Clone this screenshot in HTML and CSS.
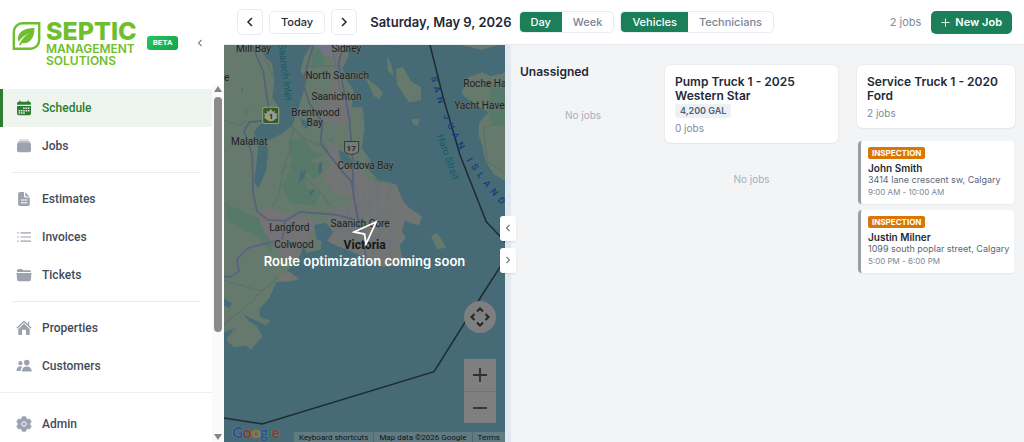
FILE: index.html
```html
<!DOCTYPE html>
<html lang="en">
<head>
<meta charset="utf-8">
<meta name="viewport" content="width=device-width, initial-scale=1">
<title>Schedule</title>
<link rel="stylesheet" href="styles.css">
</head>
<body>
<div class="app">
  <aside class="sidebar">
    <div class="brand">
      <svg class="brand-mark" viewBox="0 0 28 28" aria-hidden="true">
        <path d="M10 1.3H26.7V18a8.7 8.7 0 0 1-8.7 8.7H1.3V10A8.7 8.7 0 0 1 10 1.3Z" fill="none" stroke="#6fbe2e" stroke-width="2.4"/>
        <path d="M22 6C11 6 5.500 10.500 5.500 16.500c0 1.400.3 2.500.8 3.300C9 15.500 12.500 12.800 17 10.800c-4.500 3-8 6.500-10.500 12.200l1.600.4 1.400-2.400c7 1.200 12.500-4 12.500-15Z" fill="#6fbe2e"/>
      </svg>
      <div class="brand-name"><span class="brand-top">SEPTIC</span><span class="brand-sub">MANAGEMENT</span><span class="brand-sub">SOLUTIONS</span></div>
      <span class="beta">BETA</span>
      <button class="collapse" aria-label="Collapse sidebar"><svg viewBox="0 0 8 10" width="6" height="8"><path d="M6 1 2 5l4 4" fill="none" stroke="#7b8494" stroke-width="1.500"/></svg></button>
    </div>
    <div class="side-body">
      <nav class="nav">
        <a class="nav-item active" href="#schedule"><svg class="icon" viewBox="0 0 16 16"><path d="M1 4.800V3.500a1.800 1.800 0 0 1 1.800-1.800H3V.8h1.600v.9h6.800V.8H13v.9h.2A1.800 1.800 0 0 1 15 3.500v1.300ZM1 6h14v7.500a1.800 1.800 0 0 1-1.800 1.800H2.800A1.800 1.800 0 0 1 1 13.500Z" fill="currentColor"/><path d="M7.200 7.500h1.500V9H7.200zm2.400 0h1.500V9H9.600zm2.300 0h1.500V9h-1.500zM2.600 9.900h1.500v1.500H2.600zm2.300 0h1.500v1.500H4.900zm2.300 0h1.500v1.500H7.200zm2.400 0h1.500v1.500H9.600zm2.300 0h1.500v1.500h-1.500zM2.600 12.200h1.500v1.500H2.600zm2.300 0h1.500v1.500H4.900zm2.300 0h1.500v1.500H7.200z" fill="#edf5ee"/></svg>Schedule</a>
        <a class="nav-item" href="#jobs"><svg class="icon" viewBox="0 0 16 16"><path d="M4.500 1.500h7a1.300 1.300 0 0 1 1.200.9h-9.400a1.300 1.300 0 0 1 1.200-.9ZM3.500 3h9c.9 0 1.500.4 1.500 1H2c0-.6.600-1 1.500-1Z" fill="#b8bdc7"/><rect x="1" y="4.300" width="14" height="10" rx="2" fill="currentColor"/></svg>Jobs</a>
        <hr class="rule">
        <a class="nav-item" href="#estimates"><svg class="icon" viewBox="0 0 16 16"><path d="M3.800 1H8v4a1.500 1.500 0 0 0 1.500 1.500h4.300v6.800a1.700 1.700 0 0 1-1.700 1.700H3.800a1.700 1.700 0 0 1-1.700-1.700V2.700A1.700 1.700 0 0 1 3.800 1ZM9.200 1.200l4.400 4.200H10a.8.8 0 0 1-.8-.8Z" fill="currentColor"/><path d="M4.800 9h6.500M4.800 11.800h6.500" stroke="#fff" stroke-width="1"/></svg>Estimates</a>
        <a class="nav-item" href="#invoices"><svg class="icon" viewBox="0 0 16 16"><path d="M4.500 3.800H15M4.500 8H15M4.500 12.200H15M1.200 3.800h1.500M1.200 8h1.500M1.200 12.200h1.500" stroke="currentColor" stroke-width="1.200"/></svg>Invoices</a>
        <a class="nav-item" href="#tickets"><svg class="icon" viewBox="0 0 16 16"><path d="M1 5V3.500A1.500 1.500 0 0 1 2.500 2h3.200l1.600 1.300h6.200A1.500 1.500 0 0 1 15 4.800V5ZM.5 6h15l-.6 6.800a1.500 1.500 0 0 1-1.500 1.400H2.600a1.500 1.500 0 0 1-1.500-1.400Z" fill="currentColor"/></svg>Tickets</a>
        <hr class="rule">
        <a class="nav-item" href="#properties"><svg class="icon" viewBox="0 0 16 16"><path d="m8 3.600 5.700 5.300v5.300a.8.800 0 0 1-.8.800H10v-4.500a.7.700 0 0 0-.7-.7H6.700a.7.700 0 0 0-.7.700V15H3.100a.8.800 0 0 1-.8-.8V8.900Z" fill="currentColor"/><path d="M.8 8.200 8 1.500l7.200 6.700M12.500 5V1.700" fill="none" stroke="currentColor" stroke-width="1.300"/></svg>Properties</a>
        <a class="nav-item" href="#customers"><svg class="icon" viewBox="0 0 16 16"><circle cx="4.400" cy="5.200" r="2.100" fill="currentColor"/><circle cx="10.800" cy="4.600" r="2.800" fill="currentColor"/><path d="M.5 13c0-3 1.500-4.700 3.900-4.700.8 0 1.500.2 2 .5C5.300 9.700 4.800 11 4.700 13ZM5.800 13.600c0-3.500 2-5.200 5-5.200s5 1.700 5 5.200Z" fill="currentColor"/></svg>Customers</a>
        <div class="nav-foot">
          <a class="nav-item" href="#admin"><svg class="icon" viewBox="0 0 16 16"><path d="m6.300.8-.5 2a5.500 5.500 0 0 0-1.300.8l-2-.6L.8 6l1.500 1.400v1.300L.8 10l1.700 3 2-.6c.4.300.8.600 1.300.8l.5 2h3.400l.5-2c.5-.2.900-.5 1.300-.8l2 .6 1.700-3-1.500-1.300V7.400L15.200 6l-1.700-3-2 .6a5.500 5.500 0 0 0-1.300-.8l-.5-2Z" fill="currentColor" stroke="currentColor" stroke-linejoin="round"/><circle cx="8" cy="8" r="2.200" fill="none" stroke="#fff"/></svg>Admin</a>
        </div>
      </nav>
      <div class="scrollbar" aria-hidden="true"><i class="arrow-up"></i><i class="thumb"></i><i class="arrow-down"></i></div>
    </div>
  </aside>

  <main class="main">
    <header class="toolbar">
      <div class="dates">
        <button class="step" aria-label="Previous day"><svg viewBox="0 0 8 10" width="8" height="10"><path d="M6 1 2 5l4 4" fill="none" stroke="currentColor" stroke-width="1.500"/></svg></button>
        <button class="today">Today</button>
        <button class="step" aria-label="Next day"><svg viewBox="0 0 8 10" width="8" height="10"><path d="m2 1 4 4-4 4" fill="none" stroke="currentColor" stroke-width="1.500"/></svg></button>
      </div>
      <h1 class="date">Saturday, May 9, 2026</h1>
      <div class="toggle"><button class="on">Day</button><button>Week</button></div>
      <div class="toggle"><button class="on">Vehicles</button><button>Technicians</button></div>
      <span class="count">2 jobs</span>
      <button class="new-job"><svg viewBox="0 0 10 10" width="9" height="9"><path d="M5 .5v9M.5 5h9" stroke="#fff" stroke-width="1"/></svg>New Job</button>
    </header>

    <div class="content">
      <section class="map" aria-label="Map">
        <svg class="map-art" viewBox="224 45 281 396" preserveAspectRatio="xMinYMin slice">
          <rect x="224" y="45" width="600" height="900" fill="#466b76"/>
          <g fill="#657a6c">
            <path d="M224 45H258L266 58 272 64 274 80 272 98 278 106V116L262 122 254 131 258 148 256 165 254 180 258 188 266 170 268 150 266 141 282 133 292 125 298 108 303 92 306 80 300 70 304 56 311 45H346L348 56 342 68 346 80 353 90 351 107H362L364 128 361 148 370 160 365 166 377 179 396 184 400 197 408 207 421 216 418 224 409 222 404 219 401 230 405 237 399 244 401 257 394 265 383 266 368 261 361 255 354 250 343 247 332 243 322 237 320 249 306 252 302 240 301 252 295 260 287 270 299 277 292 280 276 281 269 297 259 308 260 316 270 319 266 324 243 313 248 319 257 325 262 335 251 348 246 344 234 346 226 338 236 326 224 331Z"/>
            <path d="M386 57 390 63 393 76 387 70ZM395 69 402 67 410 81 420 87V100L408 102 396 84ZM365 78 374 84 382 92 379 99 373 96ZM411 119 418 118 417 125 412 124ZM467 77 481 72 489 76 505 72V181L492 173 484 160 481 145 477 134 478 122 487 112 469 101 460 93ZM430 235 436 232 442 241 445 247 436 248ZM461 45H496L480 50Z"/>
          </g>
          <g fill="#56796a">
            <path d="M288 140 303 136 312 151 325 153 310 160 324 169 314 179 305 171 307 188 320 190 315 205 290 202 282 186 291 165ZM312 48 326 51 323 64 311 69ZM322 140 332 137 334 151 323 150ZM350 160 358 159 358 172 350 171ZM372 178 382 181 375 199 367 190ZM225 202 258 217 279 229 270 252 260 238 228 220ZM490 84 505 78V124L492 126 487 115ZM243 108h6v6h-6z"/>
          </g>
          <g fill="#757375">
            <path d="M318 45H341L347 48 341 63 344 90 351 105 348 123H319L317 106 330 97 331 61Z" opacity=".75"/>
            <path d="M324 137 338 146 341 158 357 166 366 178 386 184 398 190 404 204 421 216 418 224 404 219 401 230 405 237 398 245 401 257 391 265 368 261 361 255 332 243 322 237 331 230 327 218 331 210 350 204 351 198 334 194 323 175 331 164Z" opacity=".85"/>
            <path d="M257 212 270 207 293 216 314 219 313 231 303 241 299 256 287 260 276 247 264 231ZM279 275 288 270 298 278 280 280Z"/>
            <path d="M317 45H337L334 57 322 55Z" fill="#737584"/>
          </g>
          <g fill="#466b76"><path d="M314 224 325 222 333 231 325 242 316 238ZM300 172l6-4-3 10-5 4ZM318 163l4-2-1 11-3 2ZM338 149l9 5 5 8-5 6-7-8ZM241 87l1 6 1-4ZM224 297l8 5-3 5-5-3ZM300 118l6 3 1 8-5-4ZM309 192l4-4 2 1-5 6Z"/></g>
          <g fill="none" stroke="#59706c" stroke-width="1">
            <path d="M224 120 240 125 246 120M293 125 290 147 283 169 278 196 272 205M279 173 287 165 301 169 309 181 318 188 330 206M291 126 303 137 319 145M305 66H340M331 45 336 70 341 98M265 59 273 77M224 279 251 287 262 290 277 277M224 323 252 300 262 289M483 127 497 122 505 121M482 127 486 161 505 173"/>
            <path d="M319 123H350M340 105V124M224 316 233 313 244 319 240 323M228 342 236 332 232 328" stroke="#74706f"/>
          </g>
          <path d="M334 150 355 182 361 219M340 170 351 199 341 232M339 224 372 203 397 217M344 235 370 222 396 231M352 250 356 226 378 192M362 180 364 255M377 183 379 260M388 188 390 258M333 226 362 234 398 242M328 212 358 205 391 190M275 214 286 226 299 213M266 231 282 234 308 225M290 218 296 243M333 190 347 208 354 220M330 235 349 214 365 197M368 185 373 264" stroke="#687080" stroke-width=".7" fill="none"/>
          <g fill="none" stroke="#56617a" stroke-width="1.800">
            <path d="M252 46 263 71 268 105 270 115M264 120 249 122 244 131 252 154 253 193 257 211 268 219 285 220 300 211 337 214 354 219M313 45 302 82 309 103 322 122 320 143 341 170 351 181 356 213 361 234M341 51 338 64 345 98 349 121 352 160 353 196 358 219"/>
            <path d="M285 219 282 239M277 240 263 243 248 247 237 258 239 270 230 276 224 275M364 248 365 256" stroke="#596386"/>
          </g>
          <path d="M383 45C425 56 456 59 505 66" stroke="#2e6f7b" fill="none" stroke-dasharray="5 3"/>
          <path d="M429 45 442 97 459 155 485 221 505 242V256L480 295 433 370 262 422 224 416" fill="none" stroke="#1d2c31" stroke-width="1.500"/>
          <g class="place">
            <text x="236" y="52">Mill Bay</text><text x="331" y="52">Sidney</text>
            <text x="305" y="79">North Saanich</text><text x="311" y="100">Saanichton</text>
            <text x="291" y="116">Brentwood</text><text x="306" y="126">Bay</text>
            <text x="231" y="145">Malahat</text><text x="337" y="168">Cordova Bay</text>
            <text x="269" y="230">Langford</text><text x="274" y="247">Colwood</text>
            <text x="330" y="226">Saanich Core</text><text x="343" y="248" class="city">Victoria</text>
            <text x="462" y="87">Roche Harbor</text><text x="453" y="109">Yacht Haven</text><text x="224" y="81">e</text>
          </g>
          <g class="water-label">
            <text transform="translate(278 44) rotate(83)">Saanich Inlet</text>
            <text transform="translate(436 135) rotate(71)">Haro Strait</text>
          </g>
          <path id="arc" d="M430 77Q446 151 514 219" fill="none"/>
          <text class="county"><textPath href="#arc">SAN JUAN ISLAND</textPath></text>
          <g><rect x="262.500" y="107" width="16" height="16" rx="2" fill="#355c22" stroke="#92a184"/><path d="m270.500 108.500 2 3 2-1v3l3-.5-1.500 3 1.500 1-4 3-3 1-3-1-4-3 1.500-1-1.500-3 3 .5v-3l2 1Z" fill="#999d91"/><text x="268.500" y="119" class="shield">1</text><path d="M344 141h14v9q0 3-7 4-7-1-7-4Z" fill="#777b78" stroke="#343c3b"/><text x="346" y="150" class="shield">17</text></g>
        </svg>
        <div class="soon">
          <svg viewBox="0 0 26 26" width="26" height="26" aria-hidden="true"><path d="M24 2 2 12l10.500 2L14 24Z" fill="none" stroke="#fff" stroke-width="1.800"/></svg>
          <p>Route optimization coming soon</p>
        </div>
        <div class="map-controls">
          <button class="pan" aria-label="Map camera controls"><svg viewBox="0 0 20 20" width="20" height="20"><path d="m7 4.500 3-3 3 3M7 15.500l3 3 3-3M4.500 7l-3 3 3 3M15.500 7l3 3-3 3" fill="none" stroke="#262626" stroke-width="2"/></svg></button>
          <div class="zoom"><button aria-label="Zoom in"><svg viewBox="0 0 14 14" width="14" height="14"><path d="M7 0v14M0 7h14" stroke="#303030" stroke-width="1.800"/></svg></button><button aria-label="Zoom out"><svg viewBox="0 0 14 14" width="14" height="14"><path d="M0 7h14" stroke="#303030" stroke-width="1.800"/></svg></button></div>
        </div>
        <div class="google"><span class="g-blue">G</span><span class="g-red">o</span><span class="g-gold">o</span><span class="g-blue">g</span><span class="g-green">l</span><span class="g-red">e</span></div>
        <div class="legal"><button>Keyboard shortcuts</button><span>Map data ©2026 Google</span><a href="#terms">Terms</a></div>
      </section>

      <div class="splitter">
        <div class="split-buttons">
          <button aria-label="Shrink map"><svg viewBox="0 0 8 10" width="6" height="8"><path d="M6 1 2 5l4 4" fill="none" stroke="#64748b" stroke-width="1.500"/></svg></button>
          <button aria-label="Expand map"><svg viewBox="0 0 8 10" width="6" height="8"><path d="m2 1 4 4-4 4" fill="none" stroke="#64748b" stroke-width="1.500"/></svg></button>
        </div>
      </div>

      <section class="board">
        <div class="column">
          <h2 class="unassigned">Unassigned</h2>
          <p class="empty">No jobs</p>
        </div>
        <div class="column">
          <div class="truck"><h2>Pump Truck 1 - 2025 Western Star</h2><span class="gallons">4,200 GAL</span><p>0 jobs</p></div>
          <p class="empty">No jobs</p>
        </div>
        <div class="column">
          <div class="truck"><h2>Service Truck 1 - 2020 Ford</h2><p>2 jobs</p></div>
          <div class="jobs">
            <article class="job"><span class="kind">INSPECTION</span><h3>John Smith</h3><p>3414 lane crescent sw, Calgary</p><time>9:00 AM - 10:00 AM</time></article>
            <article class="job"><span class="kind">INSPECTION</span><h3>Justin Milner</h3><p>1099 south poplar street, Calgary</p><time>5:00 PM - 6:00 PM</time></article>
          </div>
        </div>
      </section>
    </div>
  </main>
</div>
</body>
</html>
```

FILE: styles.css
```css
* { box-sizing: border-box; }
body { margin: 0; font-family: Inter, "Liberation Sans", sans-serif; color: #1f2937; background: #fff; }
h1, h2, h3, p { margin: 0; }
button { font: inherit; color: inherit; margin: 0; padding: 0; border: 0; background: none; cursor: pointer; }
a { color: inherit; text-decoration: none; }
svg { display: block; flex: none; }

.app { display: flex; min-height: 100vh; border-bottom: 1px solid #a8abad; }

.sidebar { display: flex; flex-direction: column; flex: 0 0 224px; }
.brand { display: flex; align-items: center; height: 84px; padding: 2px 21px 0 12px; }
.brand-mark { width: 29px; height: 28px; margin-bottom: 14px; }
.brand-name { display: flex; flex-direction: column; margin-left: 5px; color: #6fbe2e; }
.brand-top { font-size: 25px; line-height: 24px; font-weight: 800; }
.brand-sub { font-size: 12px; line-height: 12px; font-weight: 600; }
.beta { margin-left: 10px; padding: 0 6px; border-radius: 3px; background: linear-gradient(135deg, #22c55e, #16a34a); color: #fff; font: 700 8px/14px Roboto, sans-serif; }
.collapse { margin-left: auto; }

.side-body { display: flex; flex: 1; }
.nav { flex: 1; padding-top: 5px; font-family: Roboto, sans-serif; }
.nav-item { display: flex; align-items: center; gap: 10px; height: 38px; padding-left: 16px; color: #434b5a; font-size: 12px; font-weight: 500; }
.nav-item.active { padding-left: 13px; border-left: 3px solid #2e7d32; background: #edf5ee; color: #2e7d32; }
.icon { width: 16px; height: 16px; color: #9ca3af; }
.active .icon { color: #2e7d32; }
.rule { height: 1px; margin: 7px 12px; border: 0; background: #ebebed; }
.nav-foot { margin-top: 7px; padding-top: 12px; border-top: 1px solid #eeeff0; }
.scrollbar { display: flex; flex-direction: column; align-items: center; width: 12px; padding: 2px 0 3px; background: #fafafa; }
.arrow-up { border: 4px solid transparent; border-top: 0; border-bottom: 6px solid #858585; }
.thumb { width: 8px; height: 235px; margin-top: 5px; border-radius: 4px; background: #8b8b8b; }
.arrow-down { margin-top: auto; border: 4px solid transparent; border-bottom: 0; border-top: 6px solid #858585; }

.main { display: flex; flex-direction: column; flex: 1; min-width: 0; }
.toolbar { display: flex; align-items: center; height: 45px; padding: 0 12px 0 13px; border-bottom: 1px solid #e8ebef; white-space: nowrap; }
.dates { display: flex; align-items: center; gap: 6px; }
.step, .today { display: flex; align-items: center; justify-content: center; border: 1px solid #e8ebf1; border-radius: 5px; color: #1f2937; }
.step { width: 26px; height: 26px; }
.today { height: 23px; padding: 0 11px; font-size: 11px; font-weight: 500; }
.date { margin: 0 1px 0 13px; font-size: 13px; font-weight: 600; }
.toggle { display: flex; margin-left: 6px; height: 22px; border: 1px solid #e8ebf1; border-radius: 5px; overflow: hidden; font-size: 11px; font-weight: 500; color: #7b8496; }
.toggle button { padding: 0 11px; }
.toggle .on { background: #1b7f5a; color: #fff; }
.count { margin-left: auto; font-size: 11px; color: #7f8999; }
.new-job { display: flex; align-items: center; gap: 5px; height: 23px; margin-left: 10px; padding: 0 10px; border-radius: 5px; background: #1b7f5a; color: #fff; font-size: 11px; font-weight: 600; }

.content { display: grid; grid-template-columns: 281fr 6px 513fr; flex: 1; }
.map { position: relative; overflow: hidden; background: #466b76; }
.map-art { position: absolute; inset: 0; width: 100%; height: 100%; }
.place { font-family: Roboto, sans-serif; font-size: 10px; font-weight: 400; fill: #1b2122; stroke: #6c7672; stroke-width: 1px; paint-order: stroke; }
.place .city { font-size: 12px; font-weight: 700; fill: #161819; }
.water-label { font: 400 10px Roboto, sans-serif; fill: #155b66; }
.county { font: 500 9px Roboto, sans-serif; letter-spacing: 5px; fill: #153c76; }
.shield { font: 700 8px Roboto, sans-serif; fill: #20282a; }
.soon { position: absolute; inset: 0; display: flex; flex-direction: column; align-items: center; justify-content: center; gap: 7px; color: #fff; font-size: 13px; line-height: 16px; font-weight: 600; white-space: nowrap; }
.map-controls { position: absolute; right: 9px; bottom: 20px; display: flex; flex-direction: column; gap: 26px; }
.pan { display: grid; place-items: center; width: 32px; height: 32px; border-radius: 50%; background: #7f7f7f; }
.zoom { display: flex; flex-direction: column; background: #7f7f7f; }
.zoom button { display: grid; place-items: center; width: 32px; height: 32px; }
.zoom button + button { border-top: 1px solid #737373; }
.google { position: absolute; left: 8px; bottom: 1px; font: 700 15px/20px Lato, sans-serif; text-shadow: 0 0 1px #9aa5a8; }
.g-blue { color: #264e8e; }
.g-red { color: #8b3028; }
.g-gold { color: #967414; }
.g-green { color: #286d38; }
.legal { position: absolute; right: 0; bottom: 0; display: flex; gap: 1px; font: 400 8px/11px Roboto, sans-serif; color: #101414; white-space: nowrap; }
.legal > * { padding: 0 5px; background: #627b82; }

.splitter { position: relative; background: #e1e8f0; }
.split-buttons { position: absolute; inset: 0 -5px; display: flex; flex-direction: column; justify-content: center; gap: 7px; }
.split-buttons button { display: grid; place-items: center; height: 25px; border-radius: 3px; background: #fff; box-shadow: 0 1px 2px #00000018; }

.board { display: grid; grid-template-columns: 126fr 173fr 158fr; gap: 19px; align-items: start; padding: 20px 9px; background: #f3f4f6; }
.column { min-width: 0; }
.unassigned { font-size: 12px; line-height: 14px; font-weight: 600; }
.empty { padding-top: 29px; text-align: center; font-size: 10px; line-height: 14px; color: #a6afbc; }
.truck { padding: 10px 10px 8px; border-radius: 6px; background: #fff; box-shadow: 0 0 2px #00000018, 0 1px 2px #0000000a; }
.truck h2 { font-size: 12px; line-height: 14px; font-weight: 600; }
.truck p { margin-top: 3px; font-size: 10px; line-height: 14px; color: #7f8999; }
.gallons { display: block; width: fit-content; margin-top: 1px; padding: 0 5px; border-radius: 3px; background: #ecf1f5; font-size: 9px; line-height: 14px; font-weight: 600; color: #536174; }
.jobs { display: flex; flex-direction: column; gap: 6px; padding: 13px 1px 0; }
.job { padding: 6px 6px 6px 7px; border-left: 3px solid #9a9ea6; border-radius: 4px; background: #fff; box-shadow: 0 1px 1px #0000000a; white-space: nowrap; }
.kind { display: block; width: fit-content; padding: 0 4px; border-radius: 2px; background: #d97706; color: #fff; font-size: 8px; line-height: 12px; font-weight: 700; }
.job h3 { margin-top: 3px; font-size: 10px; line-height: 12px; font-weight: 600; }
.job p { font-size: 9px; line-height: 12px; color: #5d6675; }
.job time { display: block; font-size: 8px; line-height: 12px; color: #7d8796; }
```
